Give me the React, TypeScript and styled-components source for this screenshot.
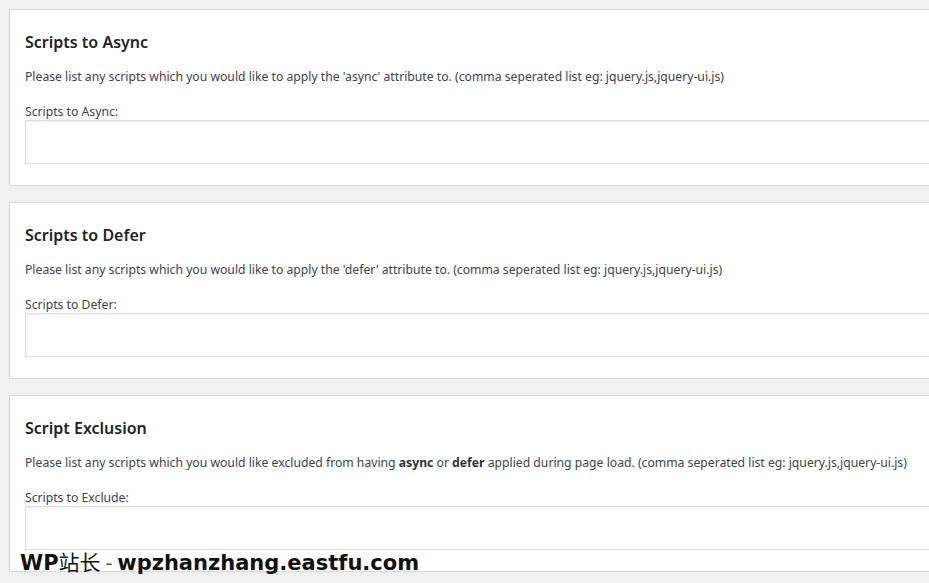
import React from "react";
import styled, { createGlobalStyle } from "styled-components";

const Global = createGlobalStyle`
  html, body { margin: 0; padding: 0; background: #f0f0f1; overflow: hidden; }
  body { font-family: "Noto Sans", "Open Sans", sans-serif; }
`;

const Page = styled.div`
  position: relative;
  width: 929px;
  height: 583px;
  overflow: hidden;
  padding: 9px 0 0 9px;
  box-sizing: border-box;
  display: flex;
  flex-direction: column;
  gap: 16px;
`;

const Card = styled.section`
  width: 960px;
  box-sizing: border-box;
  background: #fff;
  border: 1px solid #d6d6d8;
  padding: 20px 15px 21px 15px;
  display: flex;
  flex-direction: column;
`;

const Title = styled.h2`
  margin: 0;
  font-size: 16px;
  line-height: 24px;
  font-weight: 600;
  color: #1d2327;
`;

const Desc = styled.p`
  margin: 13px 0 0;
  font-size: 12.2px;
  line-height: 20px;
  color: #3c434a;
  b { font-weight: 700; color: #2c3338; }
`;

const Label = styled.label`
  margin-top: 17px;
  font-size: 12.2px;
  line-height: 16px;
  color: #3c434a;
`;

const Field = styled.div`
  height: 44px;
  box-sizing: border-box;
  border: 1px solid #dcdcde;
  box-shadow: inset 0 1px 2px rgba(0, 0, 0, 0.07);
  background: #fff;
`;

const Watermark = styled.div`
  position: absolute;
  left: 20px;
  top: 547px;
  font-family: "DejaVu Sans", Verdana, sans-serif;
  font-weight: 700;
  font-size: 21px;
  line-height: 28px;
  color: #111;
  white-space: nowrap;
`;

const Thin = styled.span<{ $muted?: boolean }>`
  font-family: "Noto Sans CJK SC", sans-serif;
  font-weight: 400;
  color: ${(p) => (p.$muted ? "#555" : "#111")};
`;

const sections = [
  {
    title: "Scripts to Async",
    desc: <>Please list any scripts which you would like to apply the 'async' attribute to. (comma seperated list eg: jquery.js,jquery-ui.js)</>,
    label: "Scripts to Async:",
  },
  {
    title: "Scripts to Defer",
    desc: <>Please list any scripts which you would like to apply the 'defer' attribute to. (comma seperated list eg: jquery.js,jquery-ui.js)</>,
    label: "Scripts to Defer:",
  },
  {
    title: "Script Exclusion",
    desc: <>Please list any scripts which you would like excluded from having <b>async</b> or <b>defer</b> applied during page load. (comma seperated list eg: jquery.js,jquery-ui.js)</>,
    label: "Scripts to Exclude:",
  },
];

export default function App() {
  return (
    <>
      <Global />
      <Page>
        {sections.map((s) => (
          <Card key={s.title}>
            <Title>{s.title}</Title>
            <Desc>{s.desc}</Desc>
            <Label>{s.label}</Label>
            <Field />
          </Card>
        ))}
        <Watermark>
          WP<Thin>站长</Thin>
          <Thin $muted> - </Thin>wpzhanzhang.eastfu.com
        </Watermark>
      </Page>
    </>
  );
}
